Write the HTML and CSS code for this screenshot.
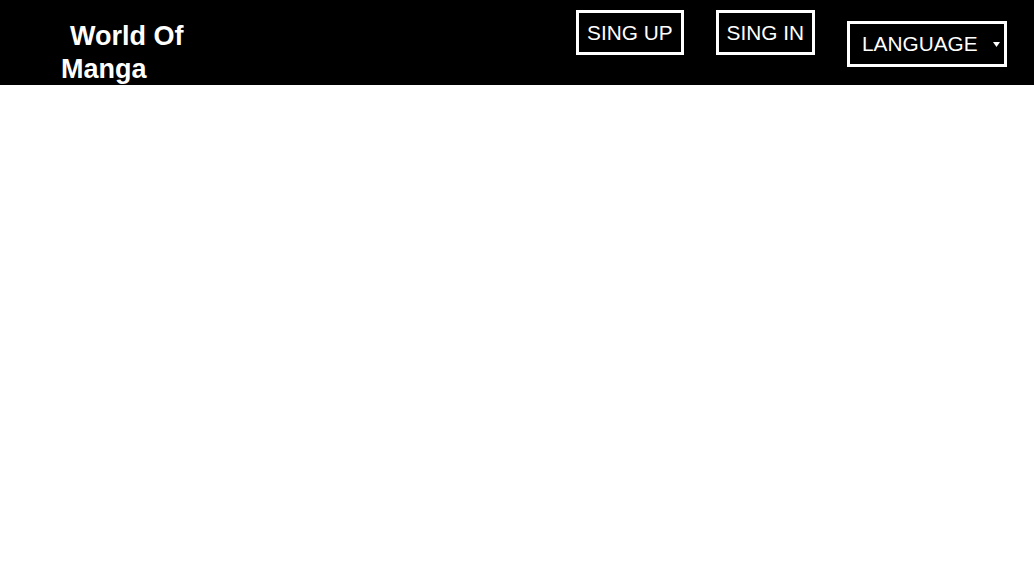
FILE: index.html
```html
<!DOCTYPE html>
<html lang="en">
<head>
<meta charset="utf-8">
<title>World Of Manga</title>
<link rel="stylesheet" href="styles.css">
</head>
<body>
<header class="topbar">
  <div class="logo">World Of Manga</div>
  <nav class="actions">
    <a class="btn" href="#">SING UP</a>
    <a class="btn" href="#">SING IN</a>
    <div class="lang">
      <select class="lang-select">
        <option>LANGUAGE</option>
        <option>ENGLISH</option>
        <option>FRANÇAIS</option>
      </select>
      <svg class="lang-arrow" width="7" height="5" viewBox="0 0 7 5"><path d="M0 0H7L3.5 5Z" fill="#fff"/></svg>
    </div>
  </nav>
</header>
</body>
</html>
```
FILE: styles.css
```css
html, body {
  margin: 0;
  padding: 0;
  background: #fff;
}
body {
  font-family: "Liberation Sans", Arial, sans-serif;
}
.topbar {
  height: 85px;
  background: #000;
  color: #fff;
  display: flex;
  justify-content: space-between;
  align-items: flex-start;
  box-sizing: border-box;
  padding: 0 27px 0 61px;
  overflow: hidden;
}
.logo {
  width: 152px;
  padding-top: 20px;
  font-size: 27px;
  font-weight: bold;
  line-height: 33px;
  text-indent: 9px;
}
.actions {
  display: flex;
  align-items: flex-start;
  gap: 32px;
}
.btn {
  margin-top: 10px;
  display: block;
  border: 3px solid #fff;
  color: #fff;
  text-decoration: none;
  font-size: 20.8px;
  line-height: 24px;
  padding: 7.5px 8px;
}
.lang {
  margin-top: 21px;
  display: flex;
  align-items: center;
  border: 3px solid #fff;
  height: 40px;
}
.lang-select {
  appearance: none;
  -webkit-appearance: none;
  background: transparent;
  color: #fff;
  border: none;
  outline: none;
  font-family: "Liberation Sans", Arial, sans-serif;
  font-size: 20.8px;
  line-height: 24px;
  padding: 8px 15px 8px 12px;
  margin: 0;
}
.lang-select option {
  background: #000;
  color: #fff;
}
.lang-arrow {
  display: block;
  margin-right: 4px;
  flex: none;
}
```
